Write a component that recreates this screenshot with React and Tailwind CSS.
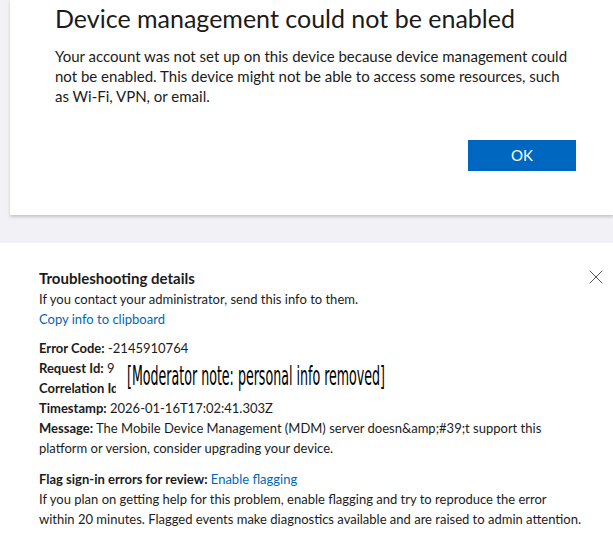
import { X } from "lucide-react";

const font = { fontFamily: 'Lato, "Noto Sans", sans-serif' };

function Row({ label, children }) {
  return (
    <p className="leading-[20px]">
      <span className="font-bold">{label}</span> {children}
    </p>
  );
}

export default function App() {
  return (
    <div
      className="relative h-[555px] w-[613px] overflow-hidden bg-white text-[#1b1b1b]"
      style={font}
    >
      {/* Dialog area */}
      <div className="h-[243px] bg-[#f1f1f6] pl-[10px]">
        <div className="h-[215px] bg-white shadow-[0_2px_3px_rgba(0,0,0,0.18)] pl-[45px] pr-[37px]">
          <h1 className="pt-[2px] text-[25px] leading-[32px] text-[#1b1b1b]">
            Device management could not be enabled
          </h1>
          <p className="mt-[12px] text-[15px] leading-[20px] text-[#1b1b1b]">
            Your account was not set up on this device because device management could
            not be enabled. This device might not be able to access some resources, such
            as Wi-Fi, VPN, or email.
          </p>
          <div className="mt-[34px] flex justify-end">
            <button className="h-[31px] w-[108px] bg-[#0067c0] text-[15px] text-white">
              OK
            </button>
          </div>
        </div>
      </div>

      {/* Troubleshooting panel */}
      <div className="relative px-[39px] pt-[24px] text-[13px] text-[#1b1b1b]">
        <button className="absolute right-[5px] top-[22px] text-[#555]">
          <X size={24} strokeWidth={1} />
        </button>
        <h2 className="text-[15px] font-bold leading-[22px]">Troubleshooting details</h2>
        <p className="leading-[20px]">
          If you contact your administrator, send this info to them.
        </p>
        <p className="leading-[20px] text-[#0067b8]">Copy info to clipboard</p>

        <div className="mt-[9px]">
          <Row label="Error Code:">-2145910764</Row>
          <Row label="Request Id:">9</Row>
          <Row label="Correlation Id:">0</Row>
          <Row label="Timestamp:">2026-01-16T17:02:41.303Z</Row>
          <Row label="Message:">
            The Mobile Device Management (MDM) server doesn&amp;amp;#39;t support this
            platform or version, consider upgrading your device.
          </Row>
        </div>

        <p className="mt-[11px] leading-[20px]">
          <span className="font-bold">Flag sign-in errors for review:</span>{" "}
          <span className="text-[#0067b8]">Enable flagging</span>
        </p>
        <p className="whitespace-nowrap leading-[20px]">
          If you plan on getting help for this problem, enable flagging and try to reproduce the error
          <br />
          within 20 minutes. Flagged events make diagnostics available and are raised to admin attention.
        </p>

        {/* moderator overlay */}
        <div
          className="absolute left-[116px] top-[116px] h-[40px] w-[272px] bg-white pl-[11px] text-[27px] leading-[34px] text-black"
          style={{ fontFamily: '"DejaVu Sans Condensed", "Liberation Sans", sans-serif' }}
        >
          <span className="inline-block origin-left scale-x-[0.52] whitespace-nowrap">
            [Moderator note: personal info removed]
          </span>
        </div>
      </div>
    </div>
  );
}
